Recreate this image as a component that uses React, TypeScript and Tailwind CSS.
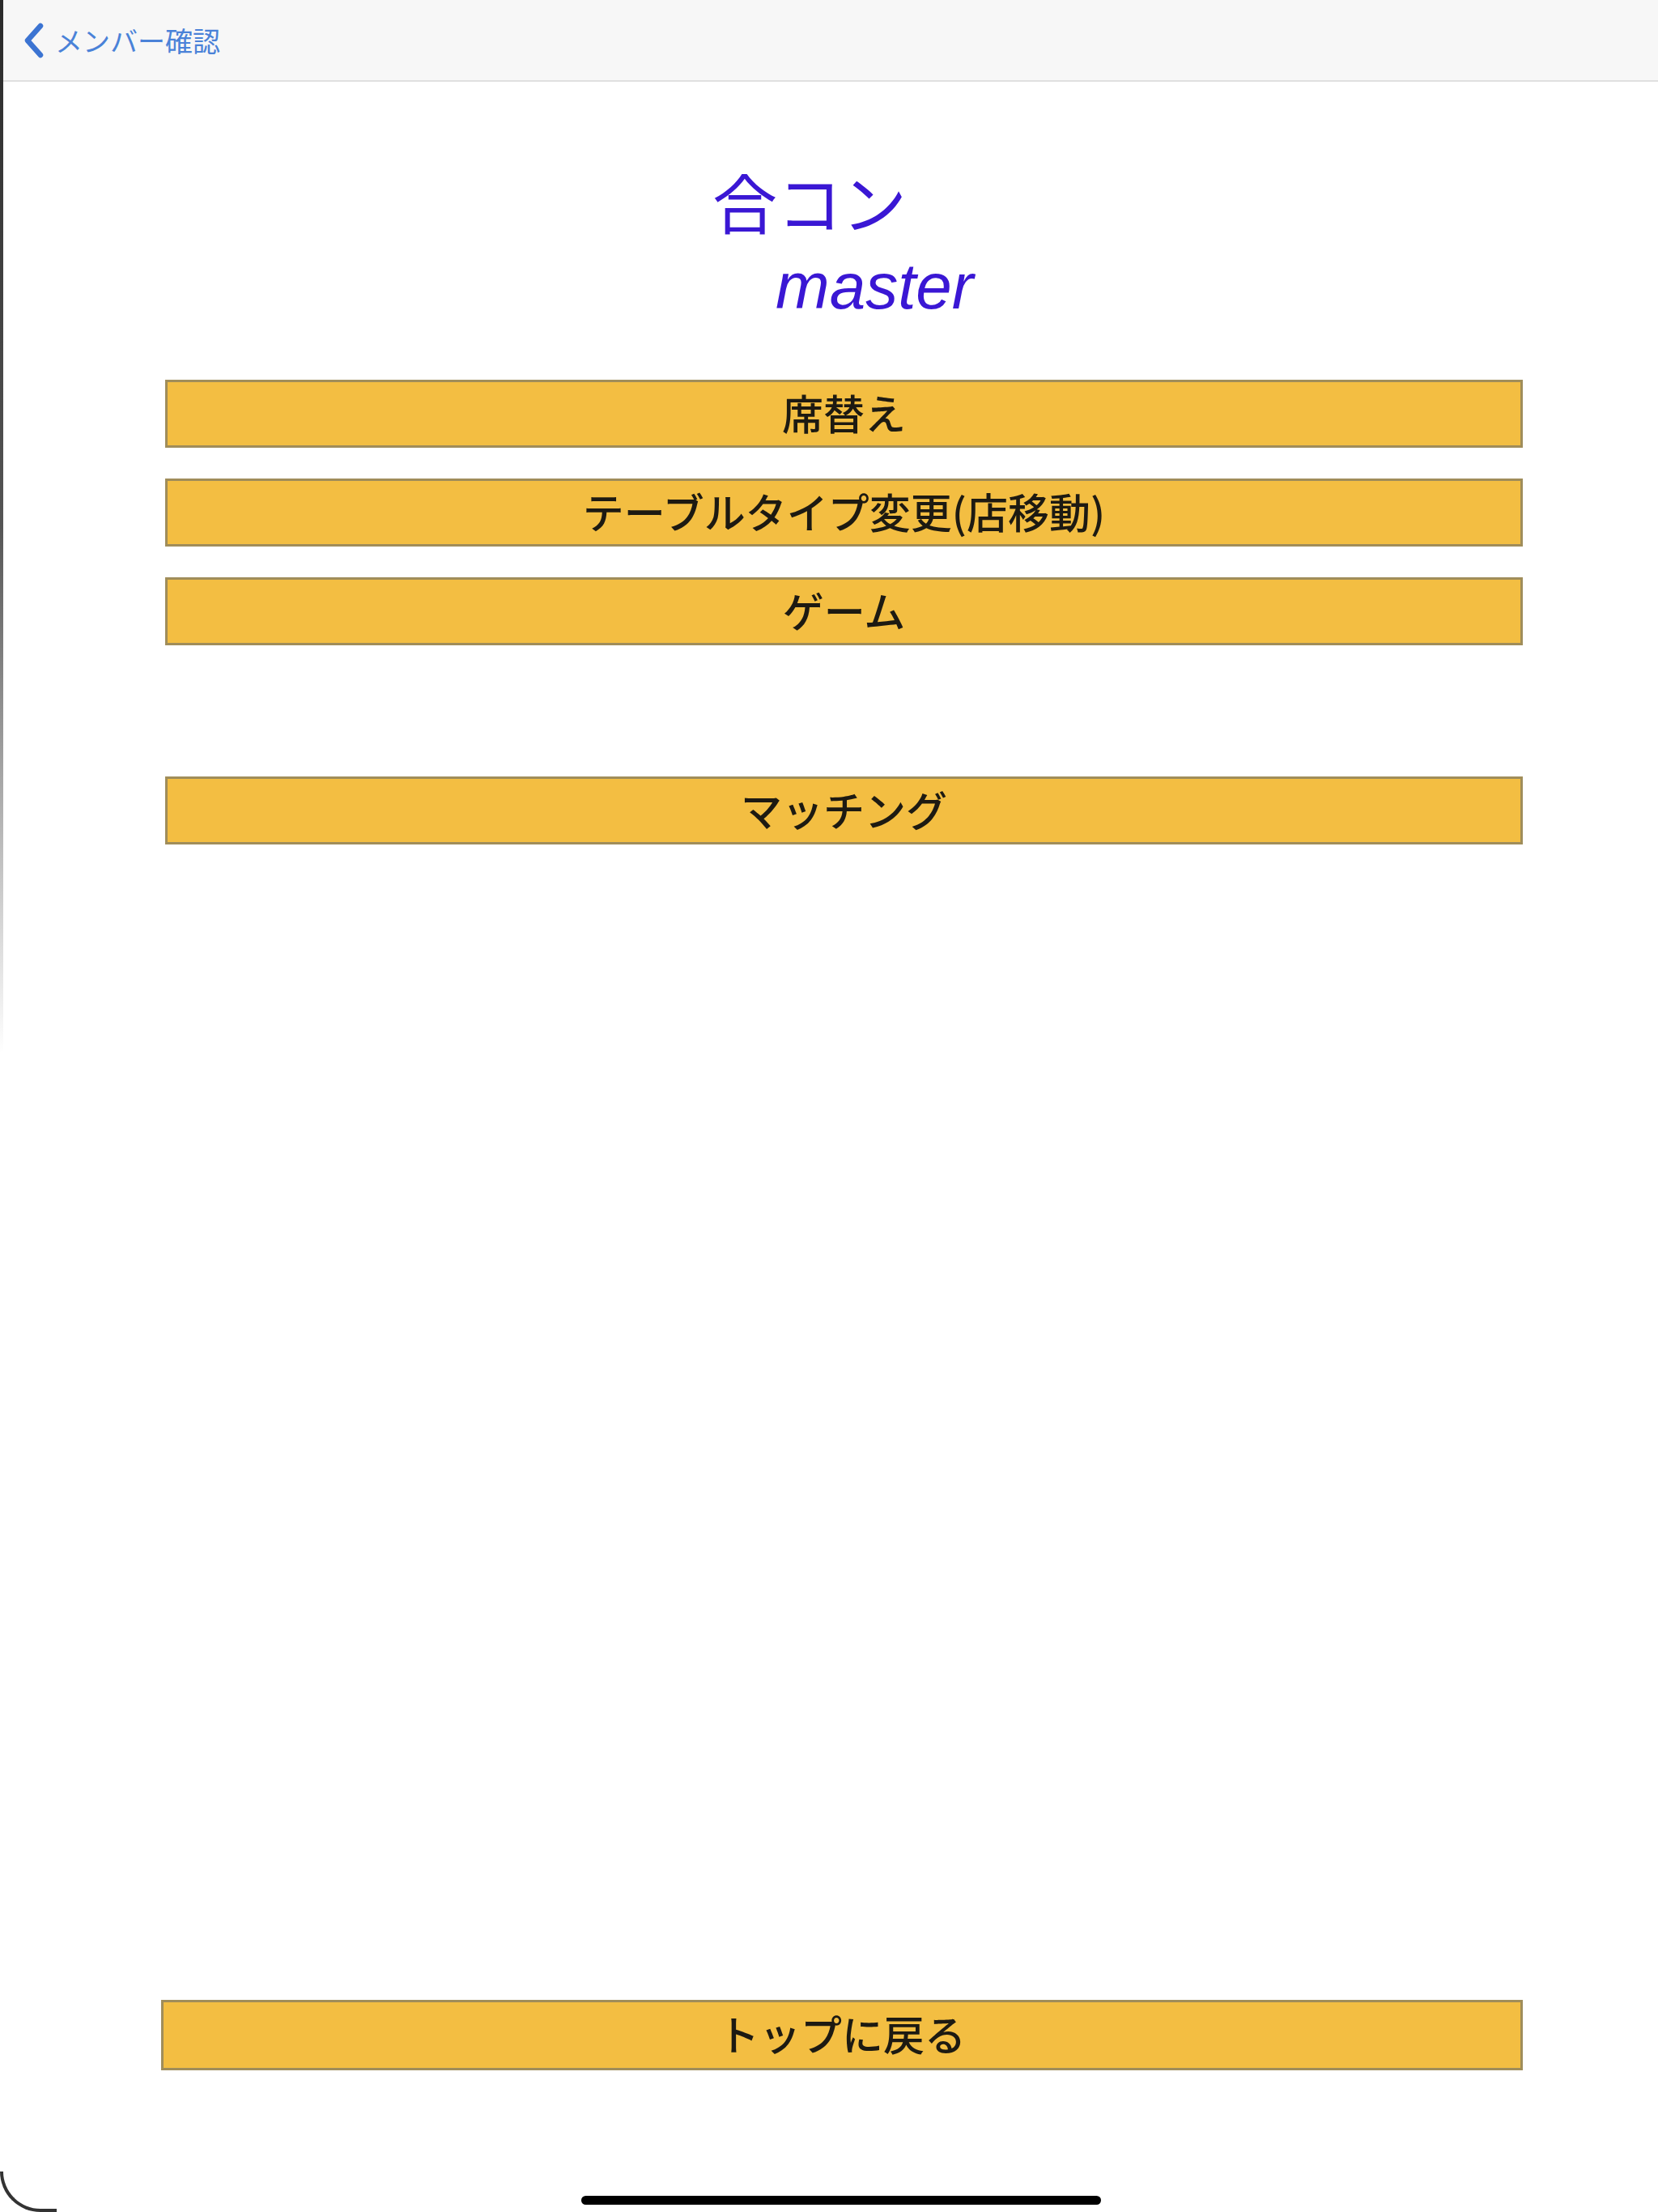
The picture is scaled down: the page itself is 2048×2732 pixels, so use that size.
import React from 'react';

const jp = { fontFamily: '"Noto Sans CJK JP", "Noto Sans", sans-serif' };

// Yellow bar button used for every menu entry
const MenuButton: React.FC<{ label: string; bottom?: boolean }> = ({ label, bottom }) => (
  <button
    className={`${bottom ? 'w-[1682px] h-[87px]' : 'w-[1677px] h-[84px]'} bg-[#f3be42] border-[3px] border-[#a08d5a] flex items-center justify-center pb-[4px] text-[51px] leading-none font-medium text-[#1d1a12]`}
    style={jp}
  >
    {label}
  </button>
);

const App: React.FC = () => {
  const menu = ['席替え', 'テーブルタイプ変更(店移動)', 'ゲーム'];

  return (
    <div className="relative w-full h-[2732px] bg-white flex flex-col overflow-hidden" style={jp}>
      {/* navigation bar */}
      <header className="h-[101px] shrink-0 bg-[#f7f7f7] border-b-2 border-[#e0e0e0] flex items-center pl-[28px]">
        <svg width="28" height="44" viewBox="0 0 28 44" fill="none">
          <path d="M22 4 L6 22 L22 40" stroke="#3c74d2" strokeWidth="6.5" strokeLinecap="round" strokeLinejoin="round" />
        </svg>
        <span className="ml-[12px] text-[34px] leading-none text-[#4a82d8]">メンバー確認</span>
      </header>

      {/* title */}
      <div className="mt-[106px] pl-[880px]">
        <h1 className="text-[80px] leading-none text-[#3a17d4] font-normal">合コン</h1>
      </div>
      <div className="mt-[27px] pl-[958px]">
        <span
          className="block text-[80px] leading-none italic text-[#3a17d4]"
          style={{ fontFamily: '"Liberation Sans", Arial, sans-serif' }}
        >
          master
        </span>
      </div>

      {/* menu */}
      <div className="mt-[75px] pl-[204px] flex flex-col gap-[38px]">
        {menu.map((m) => (
          <MenuButton key={m} label={m} />
        ))}
      </div>
      <div className="mt-[162px] pl-[204px]">
        <MenuButton label="マッチング" />
      </div>

      {/* bottom */}
      <div className="mt-auto pl-[199px]">
        <MenuButton label="トップに戻る" bottom />
      </div>
      <div className="mt-[155px] mb-[9px] pl-[30px] flex justify-center">
        <div className="w-[642px] h-[11px] rounded-full bg-black" />
      </div>

      {/* device bezel edges */}
      <div className="absolute left-0 top-0 w-[4px] h-[1300px] bg-gradient-to-b from-[#2a2a2a] via-[#555] to-transparent" />
      <div className="absolute left-0 bottom-0 w-[70px] h-[50px] border-l-[4px] border-b-[4px] border-[#333] rounded-bl-[60px]" />
    </div>
  );
};

export default App;
